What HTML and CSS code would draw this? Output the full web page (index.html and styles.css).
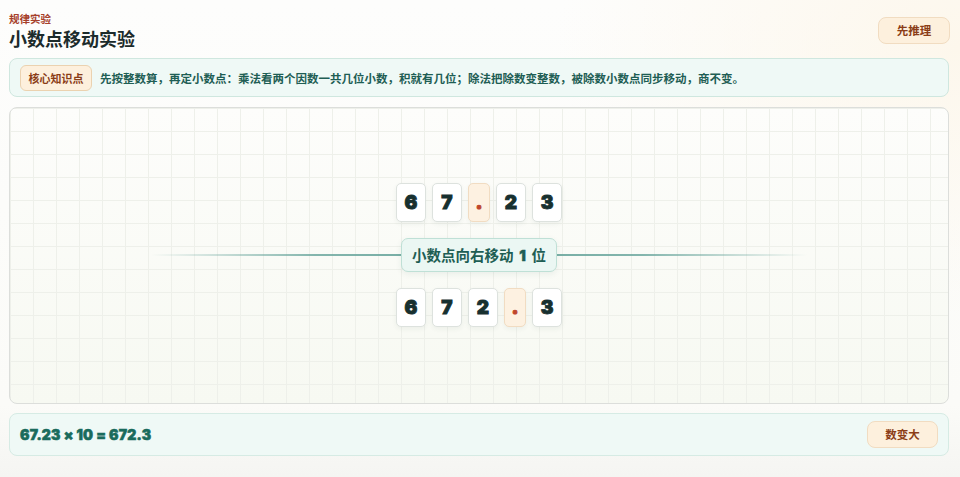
FILE: index.html
```html
<!DOCTYPE html>
<html lang="zh-CN">
<head>
<meta charset="utf-8">
<title>小数点移动实验</title>
<link rel="stylesheet" href="styles.css">
</head>
<body>
<div class="app">
  <header class="header">
    <div class="heading">
      <div class="eyebrow">规律实验</div>
      <h1 class="title">小数点移动实验</h1>
    </div>
    <button class="btn">先推理</button>
  </header>

  <section class="knowledge">
    <span class="tag">核心知识点</span>
    <p class="knowledge-text">先按整数算，再定小数点：乘法看两个因数一共几位小数，积就有几位；除法把除数变整数，被除数小数点同步移动，商不变。</p>
  </section>

  <section class="canvas">
    <div class="stage">
      <div class="tiles">
        <span class="tile">6</span>
        <span class="tile">7</span>
        <span class="tile dot">.</span>
        <span class="tile">2</span>
        <span class="tile">3</span>
      </div>
      <div class="shift-row">
        <span class="shift-label">小数点向右移动 <b class="num">1</b> 位</span>
      </div>
      <div class="tiles">
        <span class="tile">6</span>
        <span class="tile">7</span>
        <span class="tile">2</span>
        <span class="tile dot">.</span>
        <span class="tile">3</span>
      </div>
    </div>
  </section>

  <section class="formula-bar">
    <span class="formula">67.23 × 10 = 672.3</span>
    <button class="btn btn-small">数变大</button>
  </section>
</div>
</body>
</html>
```

FILE: styles.css
```css
* { box-sizing: border-box; }

html, body {
  margin: 0;
  height: 100%;
}

body {
  font-family: "Noto Sans CJK SC", "Noto Sans", sans-serif;
  background:
    radial-gradient(ellipse 60% 80% at 100% 10%, #fdf7ec 0%, rgba(253,247,236,0) 70%),
    linear-gradient(180deg, #fdfdfc 0%, #fbfbf8 85%, #f5f5f2 100%);
  color: #1c2b2b;
}

.app {
  padding: 10px 11px 0 9px;
  display: flex;
  flex-direction: column;
}

.header {
  display: flex;
  justify-content: space-between;
  align-items: center;
  height: 40px;
  margin-bottom: 8px;
}

.heading {
  display: flex;
  flex-direction: column;
  padding-top: 2px;
}

.eyebrow {
  font-size: 10.5px;
  line-height: 14px;
  font-weight: 700;
  color: #a6402a;
}

.title {
  margin: 0;
  font-size: 18px;
  line-height: 24px;
  font-weight: 700;
  color: #1c2b2b;
}

.btn {
  font-family: "Noto Sans CJK SC", sans-serif;
  font-size: 11.5px;
  font-weight: 700;
  color: #8b3d17;
  background: #fdf0dd;
  border: 1px solid #f1dcc1;
  border-radius: 8px;
  width: 72px;
  height: 27px;
  padding: 0;
  margin-right: -1px;
  margin-top: 1px;
  line-height: 25px;
}

.btn-small {
  width: 71px;
  margin-right: 0;
  margin-top: 0;
}

.knowledge {
  display: flex;
  align-items: center;
  gap: 8px;
  height: 39px;
  padding: 0 10px;
  background: #eff9f6;
  border: 1px solid #cfe7df;
  border-radius: 8px;
}

.tag {
  display: inline-flex;
  align-items: center;
  justify-content: center;
  width: 72px;
  height: 26px;
  font-size: 11px;
  font-weight: 700;
  color: #8b3d17;
  background: #fdf0dd;
  border: 1px solid #ebd2b0;
  border-radius: 6px;
  flex: none;
}

.knowledge-text {
  margin: 0;
  font-size: 11.5px;
  font-weight: 700;
  color: #1e5e54;
  white-space: nowrap;
}

.canvas {
  margin-top: 10px;
  height: 297px;
  border: 1px solid #dcdedb;
  border-radius: 8px;
  background-color: #f9faf6;
  background-image:
    linear-gradient(90deg, #eef0ea 1px, transparent 1px),
    linear-gradient(180deg, #eef0ea 1px, transparent 1px),
    linear-gradient(180deg, #fdfdfb 0%, #f7f9f2 100%);
  background-size: 23px 23px, 23px 23px, 100% 100%;
  background-position: 0 0, 0 0, 0 0;
  display: flex;
  align-items: center;
  justify-content: center;
}

.stage {
  width: 100%;
  display: flex;
  flex-direction: column;
  align-items: center;
  gap: 16px;
  margin-top: -2px;
}

.tiles {
  display: flex;
  gap: 6px;
}

.tile {
  display: flex;
  align-items: center;
  justify-content: center;
  width: 30px;
  height: 39px;
  background: #ffffff;
  border: 1px solid #dde2de;
  border-radius: 5px;
  box-shadow: 0 2px 5px rgba(40, 60, 50, 0.06);
  font-family: "Inter", "DejaVu Sans", sans-serif;
  font-weight: 900;
  font-size: 19px;
  color: #17302f;
  line-height: 1;
  -webkit-text-stroke: 0.9px #17302f;
}

.tile.dot {
  width: 22px;
  background: #fdf1e1;
  border-color: #f1dcc2;
  color: #c0462c;
  -webkit-text-stroke: 1px #c0462c;
}

.shift-row {
  width: 70%;
  display: flex;
  justify-content: center;
  background: linear-gradient(90deg, rgba(111,169,160,0) 0%, rgba(111,169,160,0.85) 25%, #6fa9a0 50%, rgba(111,169,160,0.85) 75%, rgba(111,169,160,0) 100%) no-repeat center / 100% 2px;
}

.shift-label {
  display: inline-block;
  height: 34px;
  line-height: 32px;
  padding: 0 10px;
  font-size: 14.5px;
  font-weight: 700;
  color: #1e5e54;
  background: #ebf7f3;
  border: 1px solid #bfe0d6;
  border-radius: 7px;
  box-shadow: 0 2px 6px rgba(40, 90, 80, 0.08);
  white-space: nowrap;
}

.num {
  font-family: "Inter", "DejaVu Sans", sans-serif;
  font-weight: 900;
  margin: 0 2.5px;
  -webkit-text-stroke: 0.5px #1e5e54;
}

.formula-bar {
  margin-top: 9px;
  height: 43px;
  display: flex;
  align-items: center;
  justify-content: space-between;
  padding: 0 10px;
  background: #eff9f6;
  border: 1px solid #d6ebe4;
  border-radius: 8px;
}

.formula {
  font-family: "Inter", "DejaVu Sans", sans-serif;
  font-weight: 900;
  font-size: 14px;
  letter-spacing: 0.2px;
  color: #1a6b5c;
  -webkit-text-stroke: 0.6px #1a6b5c;
}
```
